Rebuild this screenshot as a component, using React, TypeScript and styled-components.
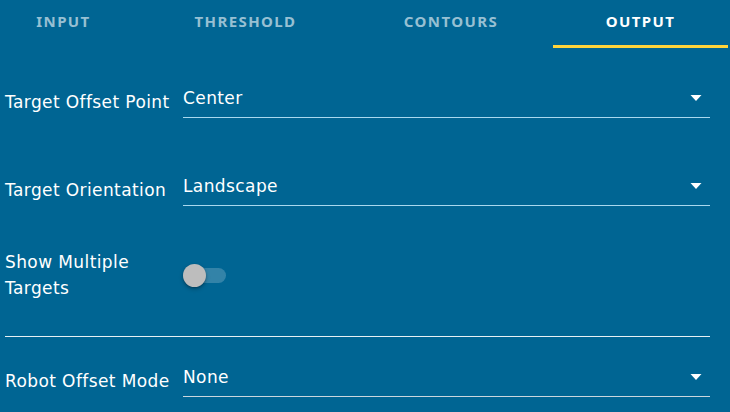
import React from "react";
import styled, { createGlobalStyle } from "styled-components";

const Global = createGlobalStyle`
  html, body { margin: 0; padding: 0; background: #006593; }
  body { font-family: "DejaVu Sans", "Noto Sans", sans-serif; color: #fff; }
  * { box-sizing: border-box; }
`;

const Page = styled.div`
  width: 730px;
  height: 412px;
  overflow: hidden;
  background: #006593;
`;

const TabBar = styled.div`
  display: flex;
  height: 48px;
`;

const Tab = styled.div<{ $width: number; $offset?: number; $active?: boolean }>`
  flex: 0 0 ${(p) => p.$width}px;
  margin-left: ${(p) => p.$offset ?? 0}px;
  display: flex;
  justify-content: center;
  padding-top: 11px;
  font-family: "Noto Sans", "Open Sans", sans-serif;
  font-size: 15px;
  line-height: 20px;
  font-weight: 700;
  letter-spacing: 1.4px;
  text-transform: uppercase;
  color: ${(p) => (p.$active ? "#ffffff" : "rgba(255,255,255,0.6)")};
  border-bottom: 3px solid ${(p) => (p.$active ? "#ffd43b" : "transparent")};
`;

const Content = styled.div`
  padding: 0 20px 0 5px;
`;

const Row = styled.div<{ $top: number }>`
  display: grid;
  grid-template-columns: 178px 1fr;
  align-items: start;
  margin-top: ${(p) => p.$top}px;
`;

const Label = styled.div<{ $lh?: number; $pt?: number }>`
  font-size: 17px;
  letter-spacing: 0.4px;
  line-height: ${(p) => p.$lh ?? 20}px;
  padding-top: ${(p) => p.$pt ?? 3.5}px;
  white-space: nowrap;
`;

const Field = styled.div<{ $line: string }>`
  display: flex;
  align-items: flex-start;
  justify-content: space-between;
  padding-bottom: 9px;
  border-bottom: 1px solid ${(p) => p.$line};
`;

const Value = styled.div`
  font-size: 17px;
  letter-spacing: 0.4px;
  line-height: 20px;
`;

const Arrow = styled.svg`
  width: 24px;
  height: 24px;
  margin: -3px 2px -1px 0;
  fill: #fff;
  flex: 0 0 auto;
`;

const ToggleRow = styled.div`
  display: grid;
  grid-template-columns: 178px 1fr;
  align-items: center;
  margin-top: 43px;
`;

const Track = styled.div`
  position: relative;
  width: 43px;
  height: 15px;
  border-radius: 8px;
  background: rgba(255, 255, 255, 0.2);
`;

const Thumb = styled.div`
  position: absolute;
  left: 0;
  top: -4px;
  width: 23px;
  height: 23px;
  border-radius: 50%;
  background: #bdbdbd;
  box-shadow: 0 2px 4px rgba(0, 0, 0, 0.25), 0 1px 2px rgba(0, 0, 0, 0.2);
`;

const Divider = styled.div`
  margin-top: 35px;
  border-top: 1px solid rgba(255, 255, 255, 0.9);
`;

function DropArrow() {
  return (
    <Arrow viewBox="0 0 24 24">
      <path d="M6.5 10l5.5 6 5.5-6z" />
    </Arrow>
  );
}

function Select({ label, value, top, line }: { label: string; value: string; top: number; line: string }) {
  return (
    <Row $top={top}>
      <Label>{label}</Label>
      <Field $line={line}>
        <Value>{value}</Value>
        <DropArrow />
      </Field>
    </Row>
  );
}

export default function App() {
  return (
    <Page>
      <Global />
      <TabBar>
        <Tab $width={127}>Input</Tab>
        <Tab $width={237}>Threshold</Tab>
        <Tab $width={174}>Contours</Tab>
        <Tab $width={175} $offset={15} $active>
          Output
        </Tab>
      </TabBar>
      <Content>
        <Select label="Target Offset Point" value="Center" top={40} line="#a9d8ee" />
        <Select label="Target Orientation" value="Landscape" top={58} line="#a9d8ee" />
        <ToggleRow>
          <Label $lh={26} $pt={0}>
            Show Multiple
            <br />
            Targets
          </Label>
          <Track>
            <Thumb />
          </Track>
        </ToggleRow>
        <Divider />
        <Select label="Robot Offset Mode" value="None" top={30} line="#c9d6de" />
      </Content>
    </Page>
  );
}
